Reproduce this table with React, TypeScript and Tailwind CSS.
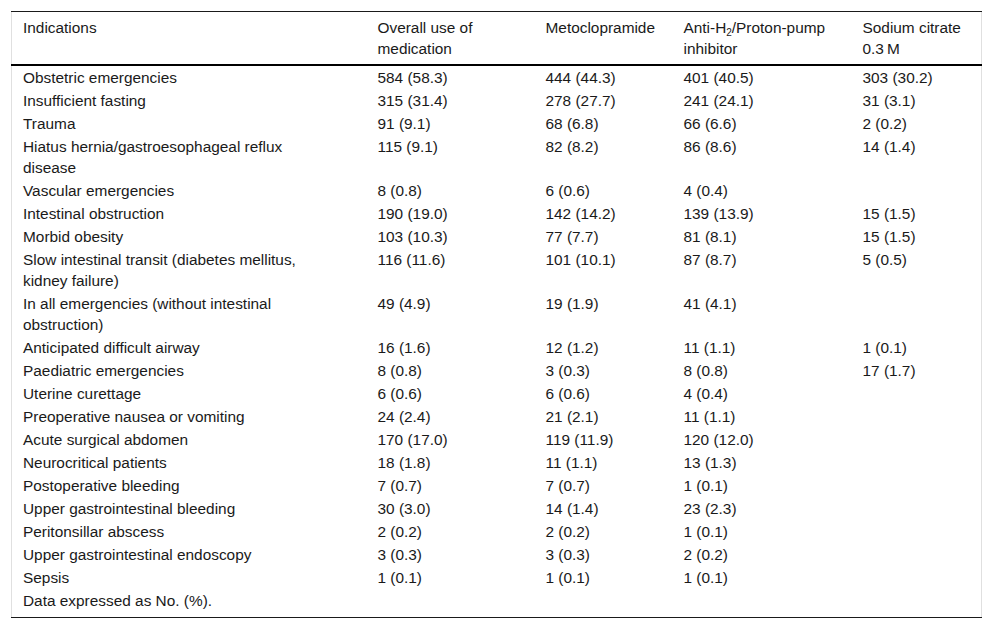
const rows: [string, string, string, string, string][] = [
  ['Obstetric emergencies', '584 (58.3)', '444 (44.3)', '401 (40.5)', '303 (30.2)'],
  ['Insufficient fasting', '315 (31.4)', '278 (27.7)', '241 (24.1)', '31 (3.1)'],
  ['Trauma', '91 (9.1)', '68 (6.8)', '66 (6.6)', '2 (0.2)'],
  ['Hiatus hernia/gastroesophageal reflux disease', '115 (9.1)', '82 (8.2)', '86 (8.6)', '14 (1.4)'],
  ['Vascular emergencies', '8 (0.8)', '6 (0.6)', '4 (0.4)', ''],
  ['Intestinal obstruction', '190 (19.0)', '142 (14.2)', '139 (13.9)', '15 (1.5)'],
  ['Morbid obesity', '103 (10.3)', '77 (7.7)', '81 (8.1)', '15 (1.5)'],
  ['Slow intestinal transit (diabetes mellitus, kidney failure)', '116 (11.6)', '101 (10.1)', '87 (8.7)', '5 (0.5)'],
  ['In all emergencies (without intestinal obstruction)', '49 (4.9)', '19 (1.9)', '41 (4.1)', ''],
  ['Anticipated difficult airway', '16 (1.6)', '12 (1.2)', '11 (1.1)', '1 (0.1)'],
  ['Paediatric emergencies', '8 (0.8)', '3 (0.3)', '8 (0.8)', '17 (1.7)'],
  ['Uterine curettage', '6 (0.6)', '6 (0.6)', '4 (0.4)', ''],
  ['Preoperative nausea or vomiting', '24 (2.4)', '21 (2.1)', '11 (1.1)', ''],
  ['Acute surgical abdomen', '170 (17.0)', '119 (11.9)', '120 (12.0)', ''],
  ['Neurocritical patients', '18 (1.8)', '11 (1.1)', '13 (1.3)', ''],
  ['Postoperative bleeding', '7 (0.7)', '7 (0.7)', '1 (0.1)', ''],
  ['Upper gastrointestinal bleeding', '30 (3.0)', '14 (1.4)', '23 (2.3)', ''],
  ['Peritonsillar abscess', '2 (0.2)', '2 (0.2)', '1 (0.1)', ''],
  ['Upper gastrointestinal endoscopy', '3 (0.3)', '3 (0.3)', '2 (0.2)', ''],
  ['Sepsis', '1 (0.1)', '1 (0.1)', '1 (0.1)', ''],
];

const th = 'pl-[11px] pr-[11px] pt-[5px] pb-[5px] text-left align-top font-normal';

export default function App() {
  return (
    <main className="bg-white p-[11px] font-['Liberation_Sans',Arial,sans-serif] text-[15.4px] leading-[21px] text-[#1a1a1a]">
      <table className="w-[970px] table-fixed border-collapse border-x border-x-[#e0e0e0]">
        <colgroup>
          <col className="w-[355px]" />
          <col className="w-[168px]" />
          <col className="w-[138px]" />
          <col className="w-[179px]" />
          <col className="w-[130px]" />
        </colgroup>
        <thead>
          <tr className="border-t border-t-[#1a1a1a] border-b-2 border-b-black">
            <th className={th}>Indications</th>
            <th className={th}>Overall use of medication</th>
            <th className={th}>Metoclopramide</th>
            <th className={th}>
              Anti-H<sub className="text-[10px] leading-none">2</sub>/Proton-pump inhibitor
            </th>
            <th className={th}>Sodium citrate 0.3&#8201;M</th>
          </tr>
        </thead>
        <tbody>
          {rows.map((r, i) => (
            <tr key={i}>
              {r.map((c, j) => (
                <td
                  key={j}
                  className={`pl-[11px] pt-[1px] pb-[1px] align-top ${j === 0 ? 'pr-[34px]' : 'pr-[11px]'}`}
                >
                  {c}
                </td>
              ))}
            </tr>
          ))}
          <tr className="border-b border-b-[#1a1a1a]">
            <td colSpan={5} className="px-[11px] pt-[1px] pb-[6px]">Data expressed as No. (%).</td>
          </tr>
        </tbody>
      </table>
    </main>
  );
}
